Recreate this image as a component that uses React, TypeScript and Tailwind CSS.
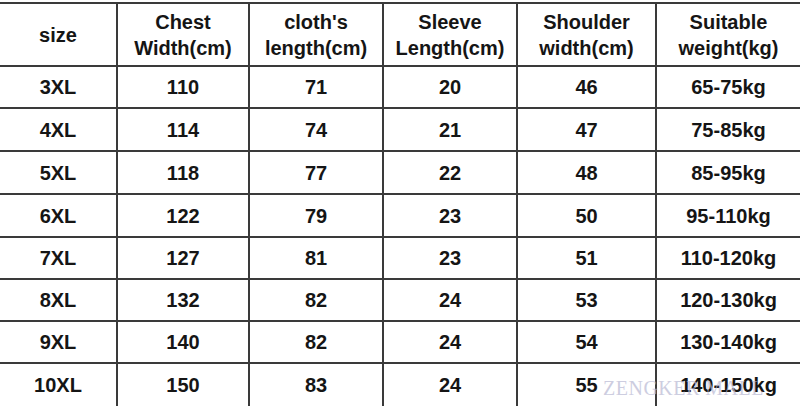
import React from "react";

const header = [
  ["size"],
  ["Chest", "Width(cm)"],
  ["cloth's", "length(cm)"],
  ["Sleeve", "Length(cm)"],
  ["Shoulder", "width(cm)"],
  ["Suitable", "weight(kg)"],
];

const rows = [
  ["3XL", "110", "71", "20", "46", "65-75kg"],
  ["4XL", "114", "74", "21", "47", "75-85kg"],
  ["5XL", "118", "77", "22", "48", "85-95kg"],
  ["6XL", "122", "79", "23", "50", "95-110kg"],
  ["7XL", "127", "81", "23", "51", "110-120kg"],
  ["8XL", "132", "82", "24", "53", "120-130kg"],
  ["9XL", "140", "82", "24", "54", "130-140kg"],
  ["10XL", "150", "83", "24", "55", "140-150kg"],
];

const heights = ["h-[42px]", "h-[43px]", "h-[43px]", "h-[43px]", "h-[42px]", "h-[42px]", "h-[42px]", "h-[42px]"];

export default function App() {
  return (
    <div
      className="relative w-[800px] h-[406px] bg-white overflow-hidden pt-[2px] text-[#151515] font-bold"
      style={{ fontFamily: '"Liberation Sans", Arial, sans-serif' }}
    >
      <div className="border-t-2 border-[#3a3a3a]">
        <div className="grid grid-cols-[116px_132px_134px_134px_139px_145px] h-[63px] border-b-2 border-[#3a3a3a]">
          {header.map((h, i) => (
            <div
              key={i}
              className={`flex flex-col items-center justify-center text-[20px] leading-[26px] ${i > 0 ? "border-l-2 border-[#3a3a3a]" : ""}`}
            >
              {h.map((t, j) => (
                <span key={j}>{t}</span>
              ))}
            </div>
          ))}
        </div>
        {rows.map((r, ri) => (
          <div
            key={ri}
            className={`grid grid-cols-[116px_132px_134px_134px_139px_145px] ${heights[ri]} ${ri < rows.length - 1 ? "border-b-2 border-[#3a3a3a]" : ""}`}
          >
            {r.map((c, ci) => (
              <div
                key={ci}
                className={`flex items-center justify-center text-[20px] ${ci > 0 ? "border-l-2 border-[#3a3a3a]" : ""}`}
              >
                {c}
              </div>
            ))}
          </div>
        ))}
      </div>
      <div
        className="absolute left-[603px] top-[378px] text-[20px] leading-[20px] font-normal text-[#b9b9d4] opacity-70 tracking-[0.5px]"
        style={{ fontFamily: '"Liberation Serif", "Times New Roman", serif' }}
      >
        ZENGKER MALL
      </div>
    </div>
  );
}
